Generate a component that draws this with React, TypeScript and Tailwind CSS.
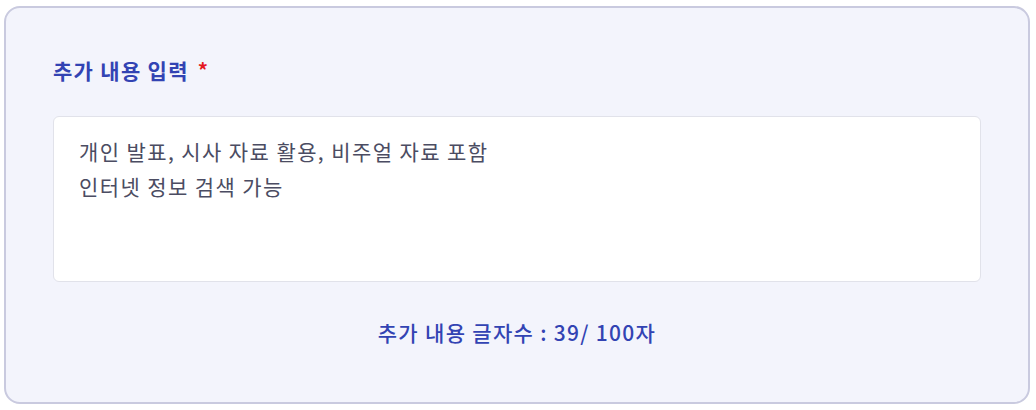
export default function App() {
  return (
    <div className="w-[1036px] h-[410px] bg-white pl-[4px] pt-[6px]" style={{ fontFamily: '"Noto Sans CJK KR", "Noto Sans", sans-serif' }}>
      <div className="w-[1026px] h-[398px] rounded-[16px] border-2 border-[#c9cadf] bg-[#f3f4fc] px-[47px] pt-[48px]">
        <div className="flex items-center h-[28px] text-[21px] font-bold text-[#3243b3] leading-[28px] tracking-[1.3px]">
          <span>추가 내용 입력</span>
          <span className="ml-[9px] text-[#e5171f] text-[20px]">*</span>
        </div>
        <div className="mt-[32px] h-[166px] rounded-[6px] border border-[#e1e2ea] bg-white px-[25px] pt-[17px] text-[21px] leading-[35px] tracking-[1.4px] text-[#4b4c62]">
          <div>개인 발표, 시사 자료 활용, 비주얼 자료 포함</div>
          <div>인터넷 정보 검색 가능</div>
        </div>
        <div className="mt-[36px] text-center text-[21px] leading-[28px] font-medium tracking-[1.3px] text-[#3243b3]">
          추가 내용 글자수 : 39/ 100자
        </div>
      </div>
    </div>
  );
}
